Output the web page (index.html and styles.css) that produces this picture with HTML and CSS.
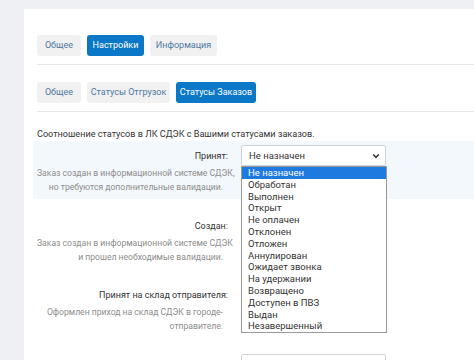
FILE: index.html
```html
<!DOCTYPE html>
<html lang="ru">
<head>
<meta charset="utf-8">
<link rel="stylesheet" href="styles.css">
</head>
<body>
<div class="panel">
  <div class="tabs">
    <span class="tab w44">Общее</span>
    <span class="tab active w57">Настройки</span>
    <span class="tab w67">Информация</span>
  </div>
  <div class="tabs tabs-second">
    <span class="tab w44">Общее</span>
    <span class="tab w83">Статусы Отгрузок</span>
    <span class="tab active w80">Статусы Заказов</span>
  </div>
  <p class="intro">Соотношение статусов в ЛК СДЭК с Вашими статусами заказов.</p>

  <div class="row shaded">
    <div class="info">
      <div class="label">Принят:</div>
      <div class="desc">Заказ создан в информационной системе СДЭК,<br>но требуются дополнительные валидации.</div>
    </div>
    <div class="field">
      <div class="select open">Не назначен
        <svg class="chev" viewBox="0 0 10 10" width="8" height="8"><path d="M1.5 3.2 L5 6.7 L8.5 3.2" fill="none" stroke="#333" stroke-width="1.8"/></svg>
        <ul class="options">
          <li class="sel">Не назначен</li>
          <li>Обработан</li>
          <li>Выполнен</li>
          <li>Открыт</li>
          <li>Не оплачен</li>
          <li>Отклонен</li>
          <li>Отложен</li>
          <li>Аннулирован</li>
          <li>Ожидает звонка</li>
          <li>На удержании</li>
          <li>Возвращено</li>
          <li>Доступен в ПВЗ</li>
          <li>Выдан</li>
          <li>Незавершенный</li>
        </ul>
      </div>
    </div>
  </div>

  <div class="row">
    <div class="info">
      <div class="label">Создан:</div>
      <div class="desc">Заказ создан в информационной системе СДЭК<br>и прошел необходимые валидации.</div>
    </div>
    <div class="field">
      <div class="select"></div>
    </div>
  </div>

  <div class="row">
    <div class="info">
      <div class="label">Принят на склад отправителя:</div>
      <div class="desc">Оформлен приход на склад СДЭК в городе-<br>отправителе.</div>
    </div>
    <div class="field">
      <div class="select"></div>
    </div>
  </div>

  <div class="row">
    <div class="info"></div>
    <div class="field">
      <div class="select"></div>
    </div>
  </div>
</div>
</body>
</html>
```
FILE: styles.css
```css
* { box-sizing: border-box; }
html, body { margin: 0; padding: 0; }
body {
  background: #eef0f3;
  font-family: Roboto, "Open Sans", sans-serif;
  overflow: hidden;
  height: 360px;
}
.panel {
  margin: 9px 0 0 24px;
  background: #fff;
  padding: 26px 0 0 13px;
  min-height: 400px;
}
.tabs {
  display: flex;
  gap: 6px;
  padding-bottom: 8px;
  border-bottom: 1px solid #e6e8ea;
}
.tabs-second { margin-top: 17px; }
.tab {
  display: block;
  height: 21px;
  line-height: 21px;
  text-align: center;
  border-radius: 3px;
  background: #f1f1f2;
  color: #4f79a3;
  font-size: 9px;
}
.tab.active { background: #0a78c6; color: #fff; }
.w44 { width: 44px; }
.w57 { width: 57px; }
.w67 { width: 67px; }
.w83 { width: 83px; }
.w80 { width: 80px; }
.intro {
  margin: 15px 0 0;
  font-size: 9.1px;
  line-height: 14px;
  color: #333;
  white-space: nowrap;
}
.row {
  display: grid;
  grid-template-columns: 191px 145px;
  column-gap: 13px;
  margin-left: -4px;
  padding: 4px 0 5px 4px;
  min-height: 58px;
}
.row + .row { margin-top: 11.5px; }
.row.shaded { background: #f3f8fc; }
.info { text-align: right; padding-top: 4px; white-space: nowrap; }
.label { font-size: 9px; line-height: 14px; color: #333; }
.desc {
  margin-top: 3px;
  padding-right: 5px;
  font-size: 8.6px;
  line-height: 14px;
  color: #8d8d8d;
}
.select {
  position: relative;
  height: 21px;
  border: 1px solid #cfd3d7;
  border-radius: 2px;
  background: #fff;
  font-size: 9.5px;
  line-height: 19px;
  padding-left: 7px;
  color: #333;
}
.chev { position: absolute; right: 5px; top: 6px; }
.options {
  position: absolute;
  left: -1px;
  top: 20px;
  width: 146px;
  margin: 0;
  padding: 0;
  list-style: none;
  background: #fff;
  border: 1px solid #9a9a9a;
  z-index: 2;
}
.options li {
  height: 11.8px;
  line-height: 11.8px;
  padding-left: 6px;
  font-size: 9.5px;
  color: #333;
}
.options li.sel { background: #1f7ae0; color: #fff; }
```
